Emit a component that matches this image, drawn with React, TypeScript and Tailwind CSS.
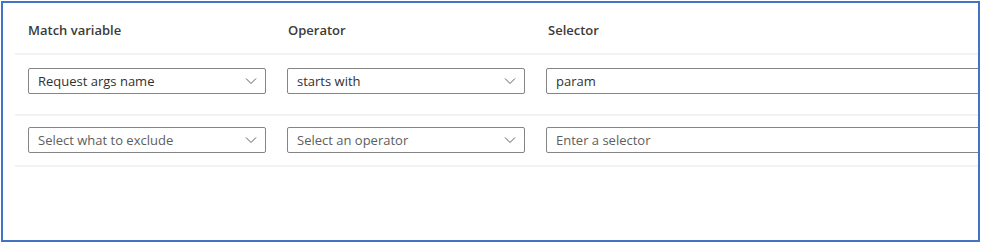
const font = { fontFamily: '"Open Sans", "Noto Sans", sans-serif' };

function Chevron() {
  return (
    <svg width="12" height="8" viewBox="0 0 12 8" fill="none" className="shrink-0">
      <path d="M1 1.5 L6 6.5 L11 1.5" stroke="#605e5c" strokeWidth="1" />
    </svg>
  );
}

function Dropdown({ text, placeholder }: { text: string; placeholder?: boolean }) {
  return (
    <div className="flex h-[26px] w-[238px] shrink-0 items-center justify-between rounded-[2px] border border-[#858585] bg-white pl-[9px] pr-[8px]">
      <span className={`text-[13px] leading-none ${placeholder ? "text-[#605e5c]" : "text-[#323130]"}`}>
        {text}
      </span>
      <Chevron />
    </div>
  );
}

function TextBox({ text, placeholder }: { text: string; placeholder?: boolean }) {
  return (
    <div className="flex h-[26px] w-[460px] shrink-0 items-center rounded-[2px] border border-[#858585] bg-white pl-[9px]">
      <span className={`text-[13px] leading-none ${placeholder ? "text-[#605e5c]" : "text-[#323130]"}`}>
        {text}
      </span>
    </div>
  );
}

export default function App() {
  return (
    <div className="h-[243px] w-[981px] bg-white pl-px pt-px" style={font}>
      <div className="h-[241px] w-[979px] overflow-hidden border-2 border-[#4472c4] bg-white">
        <div className="ml-3">
          <div className="flex h-[52px] items-center gap-[22px] border-b-2 border-[#f3f2f1] pl-[13px] pt-[6px] text-[13px] font-semibold text-[#3b3a39]">
            <div className="w-[238px] shrink-0">Match variable</div>
            <div className="w-[238px] shrink-0">Operator</div>
            <div className="shrink-0">Selector</div>
          </div>
          <div className="flex gap-[21px] border-b-2 border-[#f3f2f1] pb-[20px] pl-[13px] pt-[13px]">
            <Dropdown text="Request args name" />
            <Dropdown text="starts with" />
            <TextBox text="param" />
          </div>
          <div className="flex gap-[21px] border-b-2 border-[#f3f2f1] pb-[12px] pl-[13px] pt-[11px]">
            <Dropdown text="Select what to exclude" placeholder />
            <Dropdown text="Select an operator" placeholder />
            <TextBox text="Enter a selector" placeholder />
          </div>
        </div>
      </div>
    </div>
  );
}
